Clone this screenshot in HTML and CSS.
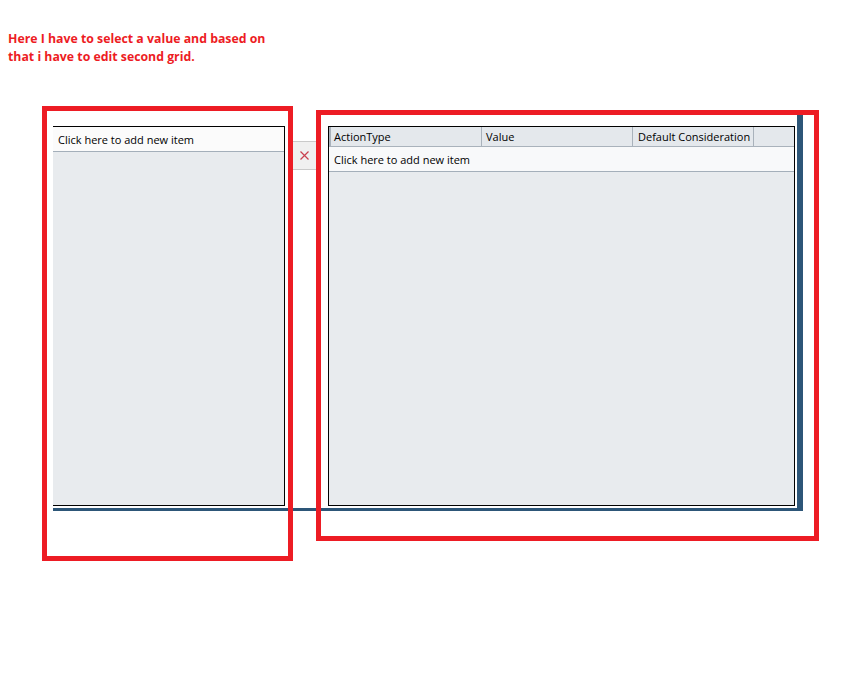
FILE: index.html
```html
<!DOCTYPE html>
<html lang="en">
<head>
<meta charset="UTF-8">
<meta name="viewport" content="width=device-width, initial-scale=1.0">
<title>Action Grid</title>
<link rel="stylesheet" href="styles.css">
</head>
<body>
  <p class="note">Here I have to select a value and based on<br>that i have to edit second grid.</p>

  <div class="workspace">
    <div class="grid grid-left">
      <div class="new-row">Click here to add new item</div>
      <div class="grid-body"></div>
    </div>

    <div class="tab">
      <svg class="close" width="9" height="9" viewBox="0 0 9 9">
        <path d="M0.5 0.5 L8.5 8.5 M8.5 0.5 L0.5 8.5" stroke="#c9414f" stroke-width="1.2" fill="none"/>
      </svg>
    </div>

    <div class="grid grid-right">
      <div class="header">
        <div class="col col-type">ActionType</div>
        <div class="col col-value">Value</div>
        <div class="col col-default">Default Consideration</div>
        <div class="col col-rest"></div>
      </div>
      <div class="new-row">Click here to add new item</div>
      <div class="grid-body"></div>
    </div>
  </div>

  <div class="mark mark-left"></div>
  <div class="mark mark-right"></div>
</body>
</html>
```

FILE: styles.css
```css
body {
  margin: 0;
  font-family: "Segoe UI", "Open Sans", "Noto Sans", sans-serif;
  background: #fff;
}
.note {
  margin: 0;
  padding: 30px 8px 0;
  font-size: 12.3px;
  font-weight: bold;
  line-height: 18px;
  color: #ed1c24;
}
.workspace {
  display: flex;
  align-items: flex-start;
  width: 742px;
  height: 382px;
  margin: 49px 0 0 53px;
  padding: 11px 2px 0 0;
  border-right: 6px solid #2d5678;
  border-bottom: 3px solid #2d5678;
}
.grid {
  display: flex;
  flex-direction: column;
  height: 378px;
  background: #e8ebee;
  font-size: 11px;
  color: #000;
}
.grid-left {
  width: 231px;
  border: 1px solid #000;
  border-left: none;
}
.grid-right {
  width: 465px;
  margin-left: 12px;
  border: 1px solid #000;
}
.new-row {
  height: 22px;
  line-height: 22px;
  padding: 2px 0 0 5px;
  background: #f8f9fa;
  border-bottom: 1px solid #a4afba;
}
.grid-left .new-row {
  background: #fbfbfb;
}
.grid-body {
  flex: 1;
}
.header {
  display: flex;
  height: 19px;
  background: #e4e8ec;
  border-bottom: 1px solid #a9b2bb;
}
.col {
  line-height: 20px;
  padding-left: 5px;
  border-right: 1px solid #a9b2bb;
  box-sizing: border-box;
}
.col-type {
  width: 153px;
  padding-left: 3px;
  border-left: 2px solid #a9b2bb;
}
.col-value {
  width: 151px;
  padding-left: 4px;
}
.col-default {
  width: 121px;
}
.col-rest {
  flex: 1;
  border-right: none;
}
.tab {
  width: 23px;
  height: 27px;
  margin: 15px 0 0 8px;
  background: #f0f0f0;
  border-top: 1px solid #cacaca;
  border-bottom: 1px solid #cacaca;
  display: flex;
  align-items: center;
  justify-content: center;
}
.close {
  display: block;
}

/* annotation frames drawn over the grids */
.mark {
  position: absolute;
  box-sizing: border-box;
  border: 5px solid #ed1c24;
}
.mark-left {
  left: 42px;
  top: 106px;
  width: 251px;
  height: 455px;
}
.mark-right {
  left: 316px;
  top: 110px;
  width: 503px;
  height: 431px;
}
```
